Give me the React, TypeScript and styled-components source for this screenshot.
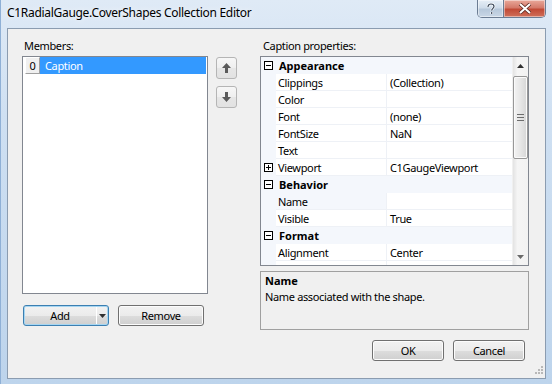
import React from 'react';
import styled, { createGlobalStyle } from 'styled-components';

const GlobalStyle = createGlobalStyle`
  html, body {
    margin: 0;
    padding: 0;
    width: 552px;
    height: 384px;
    overflow: hidden;
  }
  body {
    font-family: 'Segoe UI', 'Noto Sans', sans-serif;
    font-size: 11px;
    letter-spacing: -0.35px;
    color: #000;
  }
  * {
    box-sizing: border-box;
  }
`;

const Frame = styled.div`
  width: 552px;
  height: 384px;
  display: flex;
  flex-direction: column;
  background: linear-gradient(180deg, #dfeaf6 0%, #cfe0f2 30%, #bdd4ec 100%);
  border-left: 1px solid #8fb0d6;
`;

const TitleBar = styled.div`
  height: 28px;
  flex: none;
  display: flex;
  align-items: flex-start;
  padding-left: 6px;
`;

const TitleText = styled.div`
  font-size: 12px;
  letter-spacing: -0.3px;
  line-height: 25px;
  color: #000;
  text-shadow: 0 0 6px rgba(255, 255, 255, 0.9);
`;

const CaptionButtons = styled.div`
  margin-left: auto;
  margin-right: 6px;
  display: flex;
  height: 18px;
  border: 1px solid #6b7c93;
  border-top: none;
  border-radius: 0 0 5px 5px;
  overflow: hidden;
`;

const CaptionButton = styled.div<{ $close?: boolean }>`
  width: ${(p) => (p.$close ? '42px' : '25px')};
  height: 100%;
  display: flex;
  align-items: center;
  justify-content: center;
  background: ${(p) =>
    p.$close
      ? 'linear-gradient(180deg, #e9a99b 0%, #d47a6a 45%, #c14a36 55%, #d0705a 100%)'
      : 'linear-gradient(180deg, #e6eef7 0%, #cfdcea 45%, #b7c8db 55%, #c9d7e6 100%)'};
  border-left: ${(p) => (p.$close ? '1px solid #6b7c93' : 'none')};
  box-shadow: inset 0 0 0 1px rgba(255, 255, 255, 0.45);
`;

const Client = styled.div`
  flex: 1;
  margin: 0 6px 5px 6px;
  background: #f0f0f0;
  border: 1px solid #8b9cb0;
  display: flex;
  padding: 10px 0 0 14px;
  position: relative;
`;

const LeftColumn = styled.div`
  width: 215px;
  display: flex;
  flex-direction: column;
`;

const RightColumn = styled.div`
  width: 269px;
  margin-left: 23px;
  display: flex;
  flex-direction: column;
`;

const Label = styled.div<{ $indent?: number }>`
  height: 14px;
  line-height: 14px;
  margin: 0 0 3px ${(p) => p.$indent ?? 2}px;
`;

const ListRow = styled.div`
  display: flex;
  gap: 8px;
`;

const ListBox = styled.div`
  width: 187px;
  height: 238px;
  background: #fff;
  border: 1px solid #828790;
  padding: 0 1px;
`;

const ListItem = styled.div`
  display: flex;
  height: 17px;
`;

const IndexCell = styled.div`
  width: 15px;
  height: 17px;
  margin-left: 1px;
  background: #f0f0f0;
  border: 1px solid;
  border-color: #fff #a0a0a0 #a0a0a0 #fff;
  display: flex;
  align-items: center;
  justify-content: center;
`;

const ItemText = styled.div<{ $selected?: boolean }>`
  flex: 1;
  height: 17px;
  line-height: 17px;
  padding-left: 5px;
  background: ${(p) => (p.$selected ? '#3399ff' : 'transparent')};
  color: ${(p) => (p.$selected ? '#fff' : '#000')};
`;

const ArrowStack = styled.div`
  display: flex;
  flex-direction: column;
  gap: 7px;
  padding-top: 1px;
`;

const ArrowButton = styled.div`
  width: 21px;
  height: 22px;
  border: 1px solid #b5b5b5;
  border-radius: 3px;
  background: linear-gradient(180deg, #f7f7f7 0%, #efefef 50%, #e6e6e6 51%, #e2e2e2 100%);
  display: flex;
  align-items: center;
  justify-content: center;
`;

const ButtonRow = styled.div<{ $right?: boolean }>`
  display: flex;
  gap: 9px;
  justify-content: ${(p) => (p.$right ? 'flex-end' : 'flex-start')};
  padding: ${(p) => (p.$right ? '0 4px 0 0' : '0 0 0 1px')};
  margin-top: ${(p) => (p.$right ? 10 : 11)}px;
`;

const PushButton = styled.div<{ $w: number; $focused?: boolean }>`
  width: ${(p) => p.$w}px;
  height: 21px;
  border: 1px solid ${(p) => (p.$focused ? '#3c7fb1' : '#707070')};
  border-radius: 3px;
  background: linear-gradient(180deg, #f2f2f2 0%, #ebebeb 50%, #dddddd 51%, #cfcfcf 100%);
  box-shadow: inset 0 0 0 1px ${(p) => (p.$focused ? '#a6d6f2' : '#fcfcfc')};
  display: flex;
  align-items: center;
  justify-content: center;
  position: relative;
`;

const SplitPart = styled.div`
  position: absolute;
  right: 0;
  top: 1px;
  bottom: 1px;
  width: 12px;
  border-left: 1px solid #fff;
  display: flex;
  align-items: center;
  justify-content: center;
`;

const ButtonLabel = styled.span<{ $shift?: number }>`
  margin-right: ${(p) => p.$shift ?? 0}px;
`;

const Grid = styled.div`
  height: 210px;
  border: 1px solid #828790;
  background: #fff;
  display: flex;
  overflow: hidden;
`;

const GridRows = styled.div`
  flex: 1;
  overflow: hidden;
`;

const CategoryRow = styled.div`
  height: 17px;
  display: flex;
  align-items: center;
  background: #f4f7fc;
  font-weight: bold;
  letter-spacing: 0;
`;

const Expander = styled.div`
  width: 15px;
  display: flex;
  justify-content: center;
  flex: none;
`;

const PropRow = styled.div`
  height: 17px;
  display: flex;
`;

const Margin = styled.div`
  width: 15px;
  flex: none;
  background: #f4f7fc;
  display: flex;
  align-items: center;
  justify-content: center;
`;

const NameCell = styled.div<{ $selected?: boolean }>`
  width: 111px;
  flex: none;
  height: 17px;
  padding: 1px 0 0 2px;
  line-height: 16px;
  border-bottom: 1px solid #eef1f6;
  border-right: 1px solid #eef1f6;
  background: ${(p) => (p.$selected ? '#f4f7fc' : '#fff')};
  white-space: nowrap;
  overflow: hidden;
`;

const ValueCell = styled.div`
  flex: 1;
  height: 17px;
  padding: 1px 0 0 3px;
  line-height: 16px;
  border-bottom: 1px solid #eef1f6;
  white-space: nowrap;
  overflow: hidden;
`;

const CategoryTitle = styled.div`
  padding-left: 3px;
  line-height: 17px;
`;

const ScrollBar = styled.div`
  width: 16px;
  flex: none;
  background: linear-gradient(90deg, #e3e3e3 0%, #f5f5f5 30%, #f2f2f2 100%);
  border-left: 1px solid #f0f0f0;
  display: flex;
  flex-direction: column;
`;

const ScrollArrow = styled.div`
  height: 17px;
  display: flex;
  align-items: center;
  justify-content: center;
`;

const Thumb = styled.div`
  margin-top: 2px;
  height: 83px;
  border: 1px solid #979797;
  border-radius: 2px;
  background: linear-gradient(90deg, #f3f3f3 0%, #e6e6e6 50%, #d6d6d6 100%);
  box-shadow: inset 0 0 0 1px #fafafa;
  display: flex;
  align-items: center;
  justify-content: center;
`;

const ScrollGap = styled.div`
  flex: 1;
`;

const HelpPane = styled.div`
  height: 59px;
  margin-top: 5px;
  border: 1px solid #a0a0a0;
  background: #f0f0f0;
  padding: 1px 4px;
  line-height: 16px;
`;

const HelpTitle = styled.div`
  font-weight: bold;
  letter-spacing: 0;
`;

const SizeGrip = styled.div`
  position: absolute;
  right: 1px;
  bottom: 1px;
  width: 12px;
  height: 12px;
`;

const ExpandBox = ({ open }: { open: boolean }) => (
  <svg width="9" height="9" viewBox="0 0 9 9">
    <rect x="0.5" y="0.5" width="8" height="8" fill="#fff" stroke="#000" />
    <line x1="2" y1="4.5" x2="7" y2="4.5" stroke="#000" />
    {!open && <line x1="4.5" y1="2" x2="4.5" y2="7" stroke="#000" />}
  </svg>
);

const ArrowGlyph = ({ down }: { down?: boolean }) => (
  <svg width="9" height="10" viewBox="0 0 9 10">
    <path
      d={down ? 'M3 0h3v5h3L4.5 10 0 5h3z' : 'M4.5 0 9 5H6v5H3V5H0z'}
      fill="#5b5b5b"
    />
  </svg>
);

const Tri = ({ down, color = '#303030' }: { down?: boolean; color?: string }) => (
  <svg width="7" height="4" viewBox="0 0 7 4">
    <path d={down ? 'M0 0h7L3.5 4z' : 'M3.5 0 7 4H0z'} fill={color} />
  </svg>
);

type Prop = { name: string; value?: string; plus?: boolean; selected?: boolean };
type Category = { title: string; props: Prop[] };

const categories: Category[] = [
  {
    title: 'Appearance',
    props: [
      { name: 'Clippings', value: '(Collection)' },
      { name: 'Color' },
      { name: 'Font', value: '(none)' },
      { name: 'FontSize', value: 'NaN' },
      { name: 'Text' },
      { name: 'Viewport', value: 'C1GaugeViewport', plus: true },
    ],
  },
  {
    title: 'Behavior',
    props: [
      { name: 'Name', selected: true },
      { name: 'Visible', value: 'True' },
    ],
  },
  {
    title: 'Format',
    props: [
      { name: 'Alignment', value: 'Center' },
      // next row is scrolled out of view, only its top edge shows
      { name: '' },
    ],
  },
];

export default function App() {
  return (
    <>
      <GlobalStyle />
      <Frame>
        <TitleBar>
          <TitleText>C1RadialGauge.CoverShapes Collection Editor</TitleText>
          <CaptionButtons>
            <CaptionButton>
              <svg width="10" height="12" viewBox="0 0 10 12">
                <path
                  d="M2 4c0-2 1.3-3 3-3s3 1 3 2.6c0 1.6-2.3 2-2.3 3.9M5.7 9v2"
                  fill="none"
                  stroke="#fff"
                  strokeWidth="2.6"
                />
                <path
                  d="M2 4c0-2 1.3-3 3-3s3 1 3 2.6c0 1.6-2.3 2-2.3 3.9M5.7 9v2"
                  fill="none"
                  stroke="#3d4a5c"
                  strokeWidth="1.2"
                />
              </svg>
            </CaptionButton>
            <CaptionButton $close>
              <svg width="14" height="11" viewBox="0 0 14 11">
                <path d="M2 1l10 9M12 1 2 10" stroke="#5a2a22" strokeWidth="3.6" />
                <path d="M2 1l10 9M12 1 2 10" stroke="#fff" strokeWidth="2" />
              </svg>
            </CaptionButton>
          </CaptionButtons>
        </TitleBar>
        <Client>
          <LeftColumn>
            <Label>Members:</Label>
            <ListRow>
              <ListBox>
                <ListItem>
                  <IndexCell>0</IndexCell>
                  <ItemText $selected>Caption</ItemText>
                </ListItem>
              </ListBox>
              <ArrowStack>
                <ArrowButton>
                  <ArrowGlyph />
                </ArrowButton>
                <ArrowButton>
                  <ArrowGlyph down />
                </ArrowButton>
              </ArrowStack>
            </ListRow>
            <ButtonRow>
              <PushButton $w={86} $focused>
                <ButtonLabel $shift={12}>Add</ButtonLabel>
                <SplitPart>
                  <Tri down />
                </SplitPart>
              </PushButton>
              <PushButton $w={86}>Remove</PushButton>
            </ButtonRow>
          </LeftColumn>
          <RightColumn>
            <Label $indent={3}>Caption properties:</Label>
            <Grid>
              <GridRows>
                {categories.map((cat) => (
                  <React.Fragment key={cat.title}>
                    <CategoryRow>
                      <Expander>
                        <ExpandBox open />
                      </Expander>
                      <CategoryTitle>{cat.title}</CategoryTitle>
                    </CategoryRow>
                    {cat.props.map((p, i) => (
                      <PropRow key={`${cat.title}-${i}`}>
                        <Margin>{p.plus && <ExpandBox open={false} />}</Margin>
                        <NameCell $selected={p.selected}>{p.name}</NameCell>
                        <ValueCell>{p.value}</ValueCell>
                      </PropRow>
                    ))}
                  </React.Fragment>
                ))}
              </GridRows>
              <ScrollBar>
                <ScrollArrow>
                  <Tri />
                </ScrollArrow>
                <Thumb>
                  <svg width="7" height="7" viewBox="0 0 7 7">
                    <path d="M0 0.5h7M0 3.5h7M0 6.5h7" stroke="#6d6d6d" />
                  </svg>
                </Thumb>
                <ScrollGap />
                <ScrollArrow>
                  <Tri down color="#6a6a6a" />
                </ScrollArrow>
              </ScrollBar>
            </Grid>
            <HelpPane>
              <HelpTitle>Name</HelpTitle>
              <div>Name associated with the shape.</div>
            </HelpPane>
            <ButtonRow $right>
              <PushButton $w={72}>OK</PushButton>
              <PushButton $w={72}>Cancel</PushButton>
            </ButtonRow>
          </RightColumn>
          <SizeGrip>
            <svg width="12" height="12" viewBox="0 0 12 12">
              {[
                [9, 1],
                [6, 4],
                [9, 4],
                [3, 7],
                [6, 7],
                [9, 7],
              ].map(([x, y]) => (
                <rect key={`${x}-${y}`} x={x} y={y} width="2" height="2" fill="#b8b8b8" />
              ))}
            </svg>
          </SizeGrip>
        </Client>
      </Frame>
    </>
  );
}
